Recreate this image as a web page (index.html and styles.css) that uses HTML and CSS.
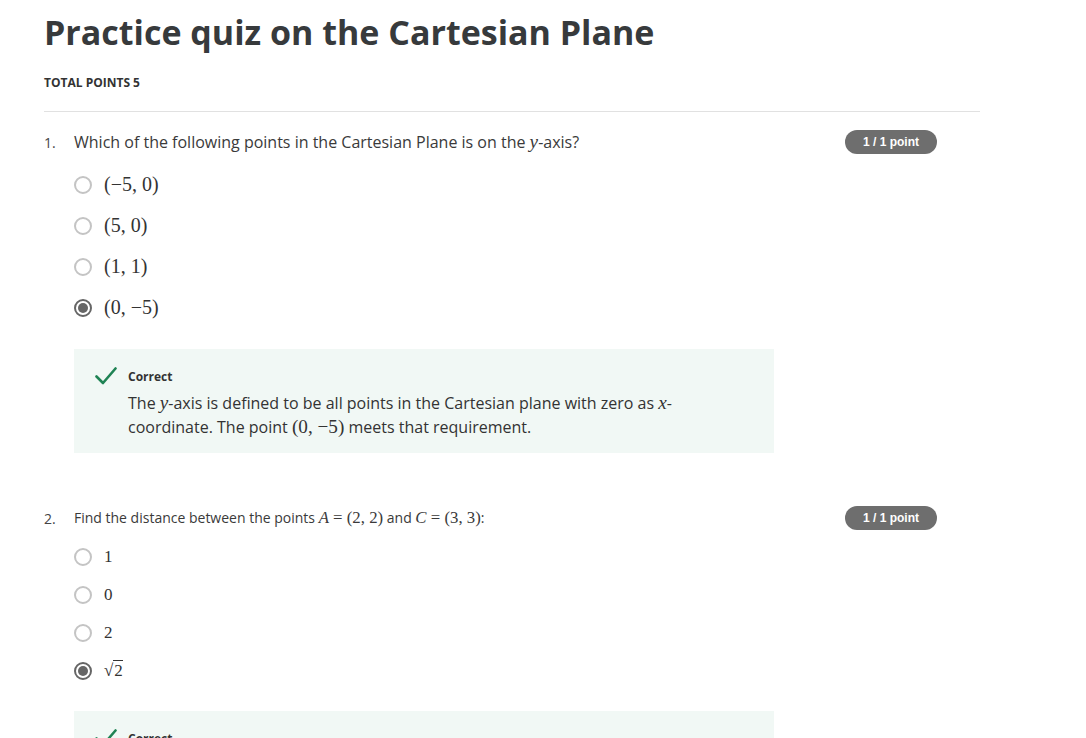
FILE: index.html
```html
<!DOCTYPE html>
<html lang="en">
<head>
<meta charset="utf-8">
<title>Practice quiz on the Cartesian Plane</title>
<link rel="stylesheet" href="styles.css">
</head>
<body>
<main class="page">
  <h1 class="title">Practice quiz on the Cartesian Plane</h1>
  <div class="total">TOTAL POINTS 5</div>
  <hr class="divider">

  <section class="question q1">
    <div class="q-row">
      <span class="q-num">1.</span>
      <span class="q-text">Which of the following points in the Cartesian Plane is on the <span class="m"><i>y</i></span>-axis?</span>
      <span class="badge">1 / 1 point</span>
    </div>
    <ul class="options big">
      <li class="opt"><span class="radio"></span><span class="m">(−5, 0)</span></li>
      <li class="opt"><span class="radio"></span><span class="m">(5, 0)</span></li>
      <li class="opt"><span class="radio"></span><span class="m">(1, 1)</span></li>
      <li class="opt"><span class="radio on"></span><span class="m">(0, −5)</span></li>
    </ul>
    <div class="feedback">
      <div class="fb-head">
        <svg class="check" width="22" height="18" viewBox="0 0 22 18"><path d="M1.5 9.5 L8 16 L20.5 1.5" fill="none" stroke="#1f8354" stroke-width="2.6" stroke-linecap="round" stroke-linejoin="round"/></svg>
        <span class="fb-title">Correct</span>
      </div>
      <p class="fb-text">The <span class="m"><i>y</i></span>-axis is defined to be all points in the Cartesian plane with zero as <span class="m"><i>x</i></span>-coordinate. The point <span class="m">(0, −5)</span> meets that requirement.</p>
    </div>
  </section>

  <section class="question q2">
    <div class="q-row">
      <span class="q-num">2.</span>
      <span class="q-text small">Find the distance between the points <span class="m"><i>A</i> = (2, 2)</span> and <span class="m"><i>C</i> = (3, 3)</span>:</span>
      <span class="badge">1 / 1 point</span>
    </div>
    <ul class="options">
      <li class="opt"><span class="radio"></span><span class="m">1</span></li>
      <li class="opt"><span class="radio"></span><span class="m">0</span></li>
      <li class="opt"><span class="radio"></span><span class="m">2</span></li>
      <li class="opt"><span class="radio on"></span><span class="m sqrt">√<span class="rad">2</span></span></li>
    </ul>
    <div class="feedback">
      <div class="fb-head">
        <svg class="check" width="22" height="18" viewBox="0 0 22 18"><path d="M1.5 9.5 L8 16 L20.5 1.5" fill="none" stroke="#1f8354" stroke-width="2.6" stroke-linecap="round" stroke-linejoin="round"/></svg>
        <span class="fb-title">Correct</span>
      </div>
      <p class="fb-text">The distance is <span class="m">√2</span>.</p>
    </div>
  </section>
</main>
</body>
</html>
```

FILE: styles.css
```css
html, body {
  margin: 0;
  padding: 0;
  background: #ffffff;
}
body {
  font-family: "Open Sans", "Liberation Sans", sans-serif;
  color: #333333;
}
.page {
  padding: 9px 0 0 44px;
  width: 936px;
}
.title {
  margin: 0;
  font-size: 34px;
  line-height: 46px;
  font-weight: 700;
  color: #373a3c;
  letter-spacing: 0;
}
.total {
  margin-top: 20px;
  font-size: 12px;
  line-height: 16px;
  font-weight: 700;
  color: #333;
}
.divider {
  margin: 20px 0 0 0;
  border: 0;
  border-top: 1px solid #e1e1e1;
  height: 0;
}
.question {
  margin-top: 18px;
}
.q2 {
  margin-top: 53px;
}
.q-row {
  display: flex;
  align-items: center;
  height: 24px;
}
.q-num {
  width: 30px;
  font-size: 14px;
  color: #444;
}
.q-text {
  flex: 1;
  font-size: 16px;
  color: #3a3a3a;
}
.q-text.small {
  font-size: 14px;
}
.badge {
  width: 92px;
  height: 24px;
  border-radius: 12px;
  background: #6e6e6e;
  color: #fff;
  font-family: "Liberation Sans", Arial, sans-serif;
  font-weight: 700;
  font-size: 12px;
  line-height: 24px;
  text-align: center;
  margin-right: 43px;
}
.m {
  font-family: "Liberation Serif", "DejaVu Serif", serif;
  font-size: 1.2em;
  white-space: nowrap;
}
.m i {
  font-style: italic;
}
.options {
  list-style: none;
  margin: 10px 0 0 30px;
  padding: 0;
}
.options.big .opt {
  height: 41px;
}
.q2 .options {
  margin-top: 8px;
}
.opt {
  height: 38px;
  display: flex;
  align-items: center;
  font-size: 16px;
  color: #333;
}
.opt .m {
  font-size: 20px;
}
.q2 .opt .m {
  font-size: 17px;
}
.radio {
  box-sizing: border-box;
  width: 18px;
  height: 18px;
  border-radius: 50%;
  border: 2px solid #c4c4c4;
  margin-right: 12px;
  display: flex;
  align-items: center;
  justify-content: center;
}
.radio.on {
  border-color: #666;
}
.radio.on::after {
  content: "";
  width: 10px;
  height: 10px;
  border-radius: 50%;
  background: #666;
}
.sqrt .rad {
  border-top: 1px solid #333;
  padding-left: 1px;
}
.feedback {
  margin: 21px 0 0 30px;
  width: 700px;
  box-sizing: border-box;
  background: #f1f8f5;
  padding: 15px 40px 14px 21px;
}
.q2 .feedback {
  margin-top: 21px;
}
.fb-head {
  display: flex;
  align-items: center;
  height: 24px;
}
.check {
  margin-right: 11px;
}
.fb-title {
  font-size: 12px;
  font-weight: 700;
  color: #333;
}
.fb-text {
  margin: 3px 0 0 33px;
  font-size: 16px;
  line-height: 24px;
  color: #333;
}
```
